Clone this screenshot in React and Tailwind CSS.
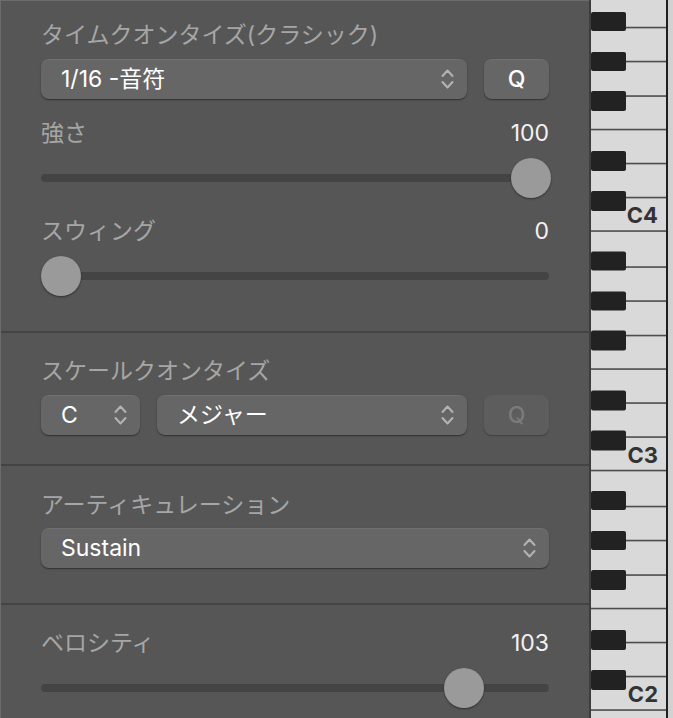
const C_BOTTOMS = [-8.5, 231, 470.5, 710, 949.5];
const LABELS = { 231: 'C4', 470.5: 'C3', 710: 'C2' };
// offsets above the C key's bottom edge
const LINES = [
  { o: 0, full: true },
  { o: 33.5 },
  { o: 67.5 },
  { o: 101.5, full: true },
  { o: 135 },
  { o: 169.5 },
  { o: 203.5 },
];
const BLACKS = [
  [40, 20],
  [80, 60],
  [140, 120],
  [179, 160],
  [219, 200],
];

const Keyboard = () => (
  <svg width="84" height="718" viewBox="0 0 84 718" className="block shrink-0">
    <rect x="0" y="0" width="2" height="718" fill="#3d3d3d" />
    <rect x="2" y="0" width="75" height="718" fill="#d9d9d9" />
    <rect x="77" y="0" width="2" height="718" fill="#1e1e1e" />
    <rect x="79" y="0" width="5" height="718" fill="#d2d2d2" />
    {C_BOTTOMS.map((b) => (
      <g key={b}>
        {LINES.map((l) => (
          <rect
            key={l.o}
            x={l.full ? 2 : 37}
            y={b - l.o - 0.75}
            width={l.full ? 75 : 40}
            height="1.6"
            fill="#4d4d4d"
          />
        ))}
        {BLACKS.map(([top, bottom]) => (
          <rect key={top} x="2" y={b - top} width="35" height={top - bottom} rx="2" fill="#222222" />
        ))}
        {LABELS[b] && (
          <text
            x="69"
            y={b - 8}
            textAnchor="end"
            fontSize="22"
            fontWeight="700"
            fill="#333333"
            fontFamily="Inter, 'Liberation Sans', sans-serif"
          >
            {LABELS[b]}
          </text>
        )}
      </g>
    ))}
  </svg>
);

const Chevrons = () => (
  <svg width="13" height="22" viewBox="0 0 13 22" fill="none" stroke="#b3b3b3" strokeWidth="2" strokeLinecap="round" strokeLinejoin="round">
    <path d="M1.5 8 6.5 2.5 11.5 8" />
    <path d="M1.5 14 6.5 19.5 11.5 14" />
  </svg>
);

const btn = 'flex h-10 items-center rounded-lg text-[23px]';
const btnOn =
  'bg-[#666666] text-white shadow-[0_1px_1.5px_rgba(0,0,0,0.45),inset_0_1px_0_rgba(255,255,255,0.07)]';
const btnOff = 'bg-[#5d5d5d] text-[#7a7a7a] shadow-[0_1px_1.5px_rgba(0,0,0,0.25)]';

const Popup = ({ label, className = '' }) => (
  <div className={`${btn} ${btnOn} justify-between pl-5 pr-[13px] ${className}`}>
    <span>{label}</span>
    <Chevrons />
  </div>
);

const QButton = ({ disabled }) => (
  <div className={`${btn} ${disabled ? btnOff : btnOn} w-[65px] shrink-0 justify-center font-medium`}>Q</div>
);

const Label = ({ children, value }) => (
  <div className="flex h-7 items-center justify-between text-[23px] leading-7">
    <span className="text-[#a6a6a6]">{children}</span>
    {value !== undefined && <span className="text-[#f2f2f2]">{value}</span>}
  </div>
);

const Slider = ({ pos }) => (
  <div className="relative flex h-10 items-center">
    <div className="h-2 w-full rounded-full bg-[#444444]" />
    <div
      className="absolute top-0 h-10 w-10 rounded-full bg-[#9a9a9a] shadow-[0_1px_2px_rgba(0,0,0,0.45)]"
      style={{ left: pos * 470 }}
    />
  </div>
);

export default function App() {
  return (
    <div className="flex h-[718px] w-[673px] overflow-hidden bg-[#565656] font-[Inter,'Noto_Sans_CJK_JP',sans-serif]">
      <div className="w-[589px] shrink-0 border-l border-t border-[#6c6c6c]">
        {/* タイムクオンタイズ */}
        <section className="h-[330px] px-10 pt-5">
          <Label>タイムクオンタイズ(クラシック)</Label>
          <div className="mt-[10px] flex gap-[17px]">
            <Popup label="1/16 -音符" className="flex-1" />
            <QButton />
          </div>
          <div className="mt-5">
            <Label value="100">強さ</Label>
          </div>
          <div className="mt-[11px]">
            <Slider pos={1} />
          </div>
          <div className="mt-[19px]">
            <Label value="0">スウィング</Label>
          </div>
          <div className="mt-[11px]">
            <Slider pos={0} />
          </div>
        </section>

        {/* スケールクオンタイズ */}
        <section className="h-[133px] border-t-2 border-[#444444] px-10 pt-6">
          <Label>スケールクオンタイズ</Label>
          <div className="mt-[10px] flex gap-[17px]">
            <Popup label="C" className="w-[99px] shrink-0" />
            <Popup label="メジャー" className="flex-1" />
            <QButton disabled />
          </div>
        </section>

        {/* アーティキュレーション */}
        <section className="h-[139px] border-t-2 border-[#444444] px-10 pt-[25px]">
          <Label>アーティキュレーション</Label>
          <div className="mt-[9px]">
            <Popup label="Sustain" />
          </div>
        </section>

        {/* ベロシティ */}
        <section className="border-t-2 border-[#444444] px-10 pt-6">
          <Label value="103">ベロシティ</Label>
          <div className="mt-[11px]">
            <Slider pos={0.857} />
          </div>
        </section>
      </div>
      <Keyboard />
    </div>
  );
}
